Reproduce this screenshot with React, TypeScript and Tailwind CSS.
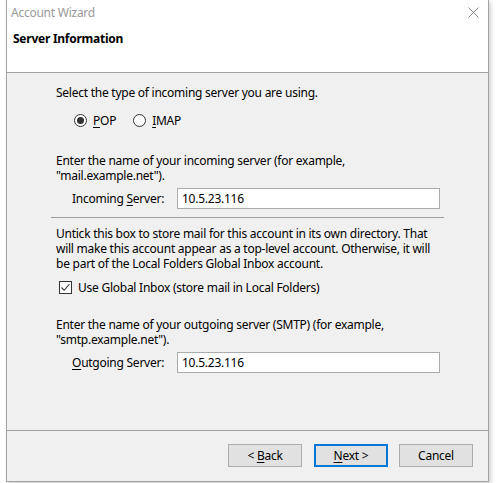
import React, { useState } from 'react';

const font = { fontFamily: '"Noto Sans", "Open Sans", sans-serif' };

const Radio = ({ checked }: { checked: boolean }) => (
  <span className="flex h-[13px] w-[13px] shrink-0 items-center justify-center rounded-full border border-[#333333] bg-white">
    {checked && <span className="h-[7px] w-[7px] rounded-full bg-[#333333]" />}
  </span>
);

const ServerRow = ({ accessKey, rest, before = '' }: { accessKey: string; rest: string; before?: string }) => (
  <div className="mt-[5px] flex h-[21px] items-center">
    <span className="ml-[16px] w-[105px]">
      {before}
      <span className="underline underline-offset-2">{accessKey}</span>
      {rest}:
    </span>
    <input
      defaultValue="10.5.23.116"
      className="h-[21px] w-[263px] border border-[#acacac] bg-white pl-[4px] text-[12px] tracking-[-0.25px] outline-none"
      style={font}
    />
  </div>
);

export default function App() {
  const [type, setType] = useState<'pop' | 'imap'>('pop');
  const [globalInbox, setGlobalInbox] = useState(true);

  return (
    <div
      className="h-[483px] w-[499px] overflow-hidden bg-white text-[12px] leading-[15px] tracking-[-0.25px] text-black"
      style={font}
    >
      <div className="ml-[6px] flex h-[482px] w-[483px] flex-col border-x border-b border-[#a3a3a3] shadow-[2px_2px_4px_rgba(0,0,0,0.18)]">
        {/* Header */}
        <div className="h-[73px] shrink-0 border-b border-[#a0a0a0] bg-white">
          <div className="flex h-[24px] items-center justify-between pl-[4px] pr-[9px]">
            <span className="text-[#999999]">Account Wizard</span>
            <svg width="11" height="11" viewBox="0 0 11 11" className="mt-[1px]">
              <path d="M0.5 0.5 L10.5 10.5 M10.5 0.5 L0.5 10.5" stroke="#8a8a8a" strokeWidth="1" fill="none" />
            </svg>
          </div>
          <div className="mt-[7px] pl-[6px] font-bold leading-[16px]">Server Information</div>
        </div>

        {/* Content */}
        <div className="flex-1 bg-[#f0f0f0] pl-[49px]">
          <div className="mt-[12px]">Select the type of incoming server you are using.</div>
          <div className="mt-[12px] flex h-[16px] items-center">
            <label className="ml-[18px] flex items-center gap-[6px]" onClick={() => setType('pop')}>
              <Radio checked={type === 'pop'} />
              <span>
                <span className="underline underline-offset-2">P</span>OP
              </span>
            </label>
            <label className="ml-[17px] flex items-center gap-[6px]" onClick={() => setType('imap')}>
              <Radio checked={type === 'imap'} />
              <span>
                <span className="underline underline-offset-2">I</span>MAP
              </span>
            </label>
          </div>

          <div className="mt-[25px]">
            Enter the name of your incoming server (for example,
            <br />
            "mail.example.net").
          </div>
          <ServerRow before="Incoming " accessKey="S" rest="erver" />

          <div className="ml-[-5px] mt-[8px] h-px w-[393px] bg-[#a0a0a0]" />

          <div className="mt-[8px]">
            Untick this box to store mail for this account in its own directory. That
            <br />
            will make this account appear as a top-level account. Otherwise, it will
            <br />
            be part of the Local Folders Global Inbox account.
          </div>
          <label className="mt-[9px] flex h-[15px] items-center" onClick={() => setGlobalInbox(!globalInbox)}>
            <span className="ml-[3px] flex h-[13px] w-[13px] items-center justify-center border border-[#333333] bg-white">
              {globalInbox && (
                <svg width="11" height="11" viewBox="0 0 11 11">
                  <path d="M1.5 5.5 L4.2 8.3 L9.5 2" stroke="#333333" strokeWidth="1.1" fill="none" />
                </svg>
              )}
            </span>
            <span className="ml-[6px]">Use Global Inbox (store mail in Local Folders)</span>
          </label>

          <div className="mt-[22px]">
            Enter the name of your outgoing server (SMTP) (for example,
            <br />
            "smtp.example.net").
          </div>
          <ServerRow accessKey="O" rest="utgoing Server" />
        </div>

        {/* Footer */}
        <div className="flex h-[51px] shrink-0 justify-end border-t border-[#a0a0a0] bg-[#f0f0f0] pr-[15px] pt-[13px]">
          <button className="h-[23px] w-[74px] border border-[#adadad] bg-[#e1e1e1]">
            &lt; <span className="underline underline-offset-2">B</span>ack
          </button>
          <button className="ml-[12px] h-[23px] w-[74px] border-2 border-[#0078d7] bg-[#e1e1e1]">
            <span className="underline underline-offset-2">N</span>ext &gt;
          </button>
          <button className="ml-[11px] h-[23px] w-[74px] border border-[#adadad] bg-[#e1e1e1]">Cancel</button>
        </div>
      </div>
    </div>
  );
}
